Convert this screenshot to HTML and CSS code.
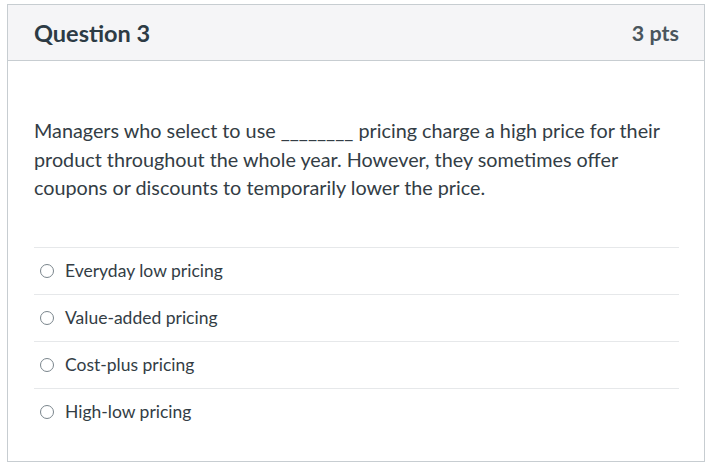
FILE: index.html
```html
<!DOCTYPE html>
<html>
<head>
<meta charset="utf-8">
<link rel="stylesheet" href="styles.css">
</head>
<body>
<div class="card">
  <div class="card-header">
    <h2 class="title">Question 3</h2>
    <span class="pts">3 pts</span>
  </div>
  <div class="card-body">
    <p class="question">Managers who select to use ________ pricing charge a high price for their product throughout the whole year. However, they sometimes offer coupons or discounts to temporarily lower the price.</p>
    <ul class="answers">
      <li class="answer"><span class="radio"></span><span class="label">Everyday low pricing</span></li>
      <li class="answer"><span class="radio"></span><span class="label">Value-added pricing</span></li>
      <li class="answer"><span class="radio"></span><span class="label">Cost-plus pricing</span></li>
      <li class="answer"><span class="radio"></span><span class="label">High-low pricing</span></li>
    </ul>
  </div>
</div>
</body>
</html>
```
FILE: styles.css
```css
html, body {
  margin: 0;
  padding: 0;
  background: #ffffff;
}
body {
  font-family: Lato, "Open Sans", "Liberation Sans", sans-serif;
  color: #2d3b45;
  padding: 4px 0 0 7px;
}
.card {
  width: 698px;
  height: 458px;
  box-sizing: border-box;
  border: 1px solid #c7cdd1;
  background: #fff;
}
.card-header {
  height: 56px;
  box-sizing: border-box;
  background: #f5f5f7;
  border-bottom: 1px solid #c7cdd1;
  display: flex;
  align-items: center;
  justify-content: space-between;
  padding: 0 25px 0 26px;
}
.title {
  margin: 0;
  font-size: 23.5px;
  font-weight: 700;
  color: #2d3b45;
}
.pts {
  font-size: 21.5px;
  font-weight: 700;
  color: #4a555d;
}
.card-body {
  padding: 55px 25px 0 26px;
}
.question {
  margin: 0;
  font-size: 19.8px;
  line-height: 28.5px;
  color: #333d45;
}
.answers {
  list-style: none;
  margin: 45px 0 0;
  padding: 0;
}
.answer {
  display: flex;
  align-items: center;
  height: 47px;
  box-sizing: border-box;
  border-top: 1px solid #e6e8ea;
  padding-left: 6px;
}
.radio {
  width: 14px;
  height: 14px;
  box-sizing: border-box;
  border: 1.5px solid #7a858c;
  border-radius: 50%;
  margin-right: 11px;
  flex: none;
}
.label {
  font-size: 17.5px;
  color: #333d45;
}
```
